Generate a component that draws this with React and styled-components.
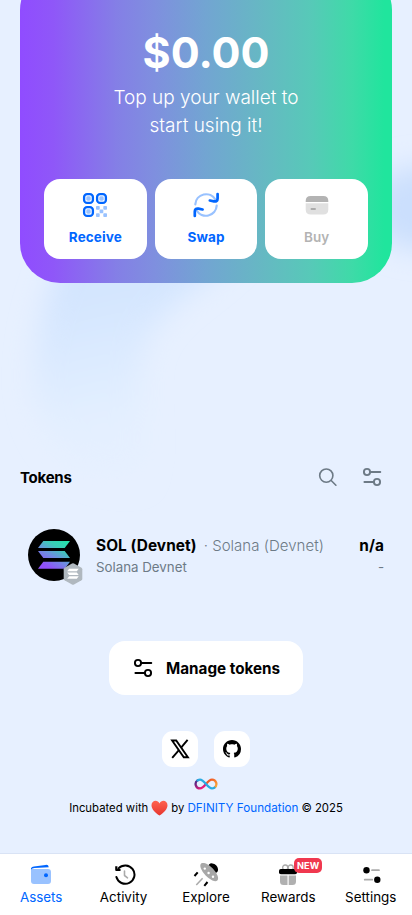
import React from 'react';
import styled, { createGlobalStyle } from 'styled-components';

const GlobalStyle = createGlobalStyle`
  * { box-sizing: border-box; }
  body { margin: 0; background: #e7f0ff; }
  a { color: #0066ff; text-decoration: none; }
  button { font: inherit; border: 0; padding: 0; background: none; color: inherit; }
  svg { display: block; flex: none; }
`;

const Page = styled.div`
  position: relative;
  height: 915px;
  display: flex;
  flex-direction: column;
  overflow: hidden;
  background: #e7f0ff;
  color: #000;
  font-family: Inter, "Liberation Sans", sans-serif;
`;

const Backdrop = styled.svg`
  position: absolute;
  inset: 0;
`;

const Main = styled.main`
  position: relative;
  flex: 1;
  display: flex;
  flex-direction: column;
  padding: 0 20px;
`;

const Hero = styled.section`
  height: 313px;
  margin-top: -30px;
  padding: 57px 24px 24px;
  border-radius: 40px;
  background: linear-gradient(90deg, #904cff 0%, #8f57f8 9%, #847fe6 26%, #7f8fdf 36%, #72a5d2 50%, #66b8c3 65%, #57c9b8 78%, #3fdaa8 89%, #20e59d 98%);
  color: #fff;
  display: flex;
  flex-direction: column;
  align-items: center;
`;

const Balance = styled.div`
  font-size: 43px;
  line-height: 50px;
  font-weight: 700;
`;

const Hint = styled.p`
  margin: 7px 0 0;
  width: 220px;
  font-size: 19px;
  line-height: 28px;
  font-weight: 350;
  text-align: center;
`;

const Actions = styled.div`
  width: 100%;
  margin-top: auto;
  display: grid;
  grid-template-columns: repeat(3, 1fr);
  gap: 8px;
`;

const Action = styled.button`
  height: 80px;
  padding-top: 13px;
  display: flex;
  flex-direction: column;
  align-items: center;
  gap: 9px;
  border-radius: 16px;
  background: #fff;
  color: ${p => (p.disabled ? '#b3b3b3' : '#0066ff')};
  font-size: 13.5px;
  line-height: 20px;
  font-weight: ${p => (p.disabled ? 600 : 700)};
  letter-spacing: 0.1px;
`;

const ListHeader = styled.header`
  margin-top: 182px;
  height: 24px;
  display: flex;
  align-items: center;
  padding-right: 10px;
`;

const Heading = styled.h2`
  flex: 1;
  margin: 2px 0 0;
  font-size: 15px;
  line-height: 24px;
  font-weight: 700;
  letter-spacing: -0.25px;
`;

const Tools = styled.div`
  display: flex;
  gap: 24px;
  color: #6d7a86;
`;

const TokenRow = styled.div`
  margin-top: 40px;
  padding: 0 8px;
  height: 52px;
  display: flex;
  align-items: center;
  gap: 16px;
`;

const Logo = styled.div`
  position: relative;
  width: 52px;
  height: 52px;
`;

const NetworkBadge = styled.svg`
  position: absolute;
  left: 35px;
  top: 33px;
`;

const TokenText = styled.div`
  display: flex;
  flex-direction: column;
  align-items: ${p => (p.$end ? 'flex-end' : 'flex-start')};
  flex: ${p => (p.$end ? 'none' : 1)};
`;

const Primary = styled.div`
  display: flex;
  gap: 7px;
  padding-top: 2px;
  font-size: 15.4px;
  line-height: 22px;
  white-space: nowrap;
`;

const Strong = styled.strong`
  font-weight: 700;
  letter-spacing: 0.07px;
`;

const Muted = styled.span`
  color: #6d7a86;
  font-size: 15px;
  font-weight: 350;
  letter-spacing: 0.03px;
`;

const Secondary = styled.div`
  color: #6d7a86;
  font-size: 13.3px;
  line-height: 20px;
`;

const ManageButton = styled.button`
  align-self: center;
  margin-top: 60px;
  width: 194px;
  height: 54px;
  display: flex;
  align-items: center;
  gap: 13px;
  padding-left: 24px;
  border-radius: 16px;
  background: #fff;
  font-size: 15.25px;
  font-weight: 700;
`;

const Footer = styled.footer`
  margin-top: 36px;
  display: flex;
  flex-direction: column;
  align-items: center;
`;

const Socials = styled.div`
  display: flex;
  gap: 16px;
  margin-bottom: 11px;
`;

const Social = styled.a`
  width: 36px;
  height: 36px;
  display: grid;
  place-items: center;
  border-radius: 11px;
  background: #fff;
  color: #000;
`;

const Credit = styled.div`
  margin-top: 8px;
  display: flex;
  align-items: center;
  gap: 3px;
  font-size: 11.35px;
  line-height: 20px;
  white-space: nowrap;
`;

const Wide = styled.a`
  font-size: 11.7px;
`;

const Nav = styled.nav`
  position: relative;
  height: 62px;
  display: grid;
  grid-template-columns: repeat(5, 82.4px);
  border-top: 1px solid #d9e3f5;
  background: #fff;
`;

const NavItem = styled.a`
  position: relative;
  display: flex;
  flex-direction: column;
  align-items: center;
  padding-top: 9px;
  color: ${p => (p.$active ? '#0066ff' : '#000')};
  font-size: 13.4px;
  line-height: 20px;
`;

const NewTag = styled.span`
  position: absolute;
  left: 47px;
  top: 4px;
  width: 28px;
  height: 15px;
  border-radius: 5px;
  background: #f0384f;
  color: #fff;
  font-size: 9.2px;
  font-weight: 700;
  line-height: 15px;
  text-align: center;
`;

const Glows = () => (
  <Backdrop width="412" height="915" aria-hidden="true">
    <defs>
      <filter id="soft" x="-50%" y="-50%" width="200%" height="200%"><feGaussianBlur stdDeviation="14" /></filter>
      <linearGradient id="fall" x1="0.35" y1="0" x2="0.55" y2="1">
        <stop offset="0.2" stopColor="#d3e5fe" />
        <stop offset="0.7" stopColor="#e3efff" />
        <stop offset="1" stopColor="#e7f0ff" />
      </linearGradient>
    </defs>
    <path filter="url(#soft)" fill="url(#fall)" d="M72 235 H250 C215 290 150 300 142 365 C137 410 150 460 135 480 C80 480 28 440 35 365 C37 315 55 275 72 235Z" />
    <ellipse filter="url(#soft)" cx="422" cy="208" rx="52" ry="42" fill="#cbdffd" />
  </Backdrop>
);

const QrIcon = () => (
  <svg width="26" height="26" viewBox="0 0 26 26" fill="none">
    {[[2.1, 2.1], [15.1, 2.1], [2.1, 15.1]].map(([x, y]) => (
      <g key={`${x}-${y}`}>
        <rect x={x} y={y} width="8.8" height="8.8" rx="3" stroke="#0066ff" strokeWidth="2.3" />
        <rect x={x + 2.2} y={y + 2.2} width="4.4" height="4.4" rx="1.4" fill="#99c2ff" />
      </g>
    ))}
    {[[14, 14], [21.3, 14], [17.6, 17.6], [14, 21.3], [21.3, 21.3]].map(([x, y]) => (
      <rect key={`${x}-${y}`} x={x} y={y} width="3.7" height="3.7" rx="0.8" fill="#99c2ff" />
    ))}
  </svg>
);

const SwapIcon = () => (
  <svg width="26" height="26" viewBox="0 0 26 26" fill="none" strokeWidth="2.2" strokeLinecap="round" strokeLinejoin="round">
    <path d="M2.300 12.300A10.800 10.800 0 0 1 22.400 7.600M23.700 13.700A10.800 10.800 0 0 1 3.600 18.400" stroke="#99c2ff" />
    <path d="M24.600 2V6.400Q24.600 9.800 21 9.300L16.800 8.500M1.800 24V19.600Q1.800 16.200 5.400 16.700L9.600 17.500" stroke="#0066ff" strokeWidth="2.7" />
  </svg>
);

const CardIcon = () => (
  <svg width="24" height="26" viewBox="0 0 24 26">
    <path d="M.7 10V9Q.7 4 5.700 4H18.300Q23.300 4 23.300 9V10Z" fill="#b3b3b3" />
    <path d="M.7 11.300H23.300V17.500Q23.300 22.500 18.300 22.500H5.700Q.7 22.500 .7 17.500Z" fill="#e0e0e0" />
    <path d="M6.300 16.900H10.200" stroke="#999" strokeWidth="1.500" strokeLinecap="round" />
  </svg>
);

const SearchIcon = () => (
  <svg width="20" height="20" viewBox="0 0 20 20" fill="none" stroke="currentColor" strokeWidth="1.600" strokeLinecap="round">
    <circle cx="8.300" cy="8.600" r="6.600" /><path d="M13.200 13.500L17.900 18.200" />
  </svg>
);

const SlidersIcon = () => (
  <svg width="20" height="20" viewBox="0 0 20 20" fill="none" stroke="currentColor" strokeWidth="1.900" strokeLinecap="round">
    <circle cx="5" cy="5" r="3.100" /><circle cx="15" cy="15" r="3.100" />
    <path d="M8.500 5H18.300M2.400 15H11.500" />
  </svg>
);

const BARS = [
  'M5.300 0H32L26.700 7H0Z',
  'M0 10H26.700L32 17H5.300Z',
  'M5.300 20.700H32L26.700 27.700H0Z',
];

const SolanaLogo = () => (
  <svg width="52" height="52" viewBox="0 0 52 52">
    <defs>
      <linearGradient id="sol" gradientUnits="userSpaceOnUse" x1="28" y1="-3" x2="8" y2="32">
        <stop stopColor="#1de9a8" /><stop offset="0.3" stopColor="#3ccbb8" />
        <stop offset="0.55" stopColor="#6d8fe0" /><stop offset="0.85" stopColor="#9150fa" />
      </linearGradient>
    </defs>
    <circle cx="26" cy="26" r="26" />
    <g transform="translate(10 12)" fill="url(#sol)">{BARS.map(d => <path key={d} d={d} />)}</g>
  </svg>
);

const SolanaBadge = () => (
  <NetworkBadge width="20" height="24" viewBox="0 0 20 24">
    <path d="M9 1.500Q10 1 11 1.500L18.500 5.700Q19.300 6.200 19.300 7.200V16.800Q19.300 17.800 18.500 18.300L11 22.500Q10 23 9 22.500L1.500 18.300Q.7 17.800 .7 16.800V7.200Q.7 6.200 1.500 5.700Z" fill="#b0b8bf" />
    <g transform="translate(4.200 6.800) scale(.36)" fill="#fff">{BARS.map(d => <path key={d} d={d} />)}</g>
  </NetworkBadge>
);

const XIcon = () => (
  <svg width="20" height="20" viewBox="0 0 20 20" fill="none" stroke="#000">
    <path d="M2.100 1.500H6.200L17.900 18.300H13.800Z" strokeWidth="1.900" />
    <path d="M17.600 .8L11.300 8.300M8.700 11.300L2.200 18.900" strokeWidth="1.900" />
  </svg>
);

const GithubIcon = () => (
  <svg width="18" height="18" viewBox="0 0 16 16" fill="currentColor">
    <path d="M8 0C3.580 0 0 3.580 0 8c0 3.540 2.290 6.530 5.470 7.590.4.070.55-.17.55-.38 0-.19-.01-.82-.01-1.490-2.010.37-2.530-.49-2.690-.94-.09-.23-.48-.94-.82-1.130-.28-.15-.68-.52-.01-.53.63-.01 1.080.58 1.230.82.72 1.210 1.870.87 2.330.66.070-.52.28-.87.51-1.070-1.780-.2-3.640-.89-3.640-3.950 0-.87.31-1.590.82-2.150-.08-.2-.36-1.020.08-2.120 0 0 .67-.21 2.200.82.64-.18 1.320-.27 2-.27s1.360.09 2 .27c1.530-1.040 2.200-.82 2.200-.82.44 1.100.16 1.920.08 2.120.51.56.82 1.270.82 2.150 0 3.070-1.870 3.750-3.650 3.950.29.25.54.73.54 1.480 0 1.070-.01 1.930-.01 2.200 0 .21.15.46.55.38A8.010 8.010 0 0 0 16 8c0-4.420-3.580-8-8-8z" />
  </svg>
);

const InfinityLogo = () => (
  <svg width="24" height="12" viewBox="0 0 24 12" fill="none" strokeWidth="2.300" strokeLinecap="round">
    <defs>
      <linearGradient id="infR" x1="0" x2="1" y1="0" y2="1"><stop offset=".2" stopColor="#f15a24" /><stop offset="1" stopColor="#fbb03b" /></linearGradient>
      <linearGradient id="infL" x1="1" x2="0" y1="1" y2="0"><stop offset=".2" stopColor="#ed1e79" /><stop offset=".9" stopColor="#522785" /></linearGradient>
    </defs>
    <path d="M12 6C14 3.500 15.500 1.600 18 1.600A4.400 4.400 0 0 1 20.500 9.600" stroke="url(#infR)" />
    <path d="M12 6C10 8.500 8.500 10.400 6 10.400A4.400 4.400 0 0 1 3.500 2.400" stroke="url(#infL)" />
    <path d="M3.500 2.400C4.300 1.900 5 1.600 6 1.600C10.500 1.600 13.500 10.400 18 10.400C19 10.400 19.700 10.200 20.500 9.600" stroke="#29abe2" />
  </svg>
);

const Heart = () => (
  <svg width="17" height="16" viewBox="0 0 17 16">
    <defs><linearGradient id="heart" x1="0" x2="0" y1="0" y2="1"><stop stopColor="#ff6250" /><stop offset="1" stopColor="#e6362f" /></linearGradient></defs>
    <path d="M8.500 15.500C4 12.500 .5 9 .5 5.200C.5 .3 6.600-.8 8.500 3.400C10.400-.8 16.500 .3 16.500 5.200C16.500 9 13 12.500 8.500 15.500Z" fill="url(#heart)" />
  </svg>
);

const WalletIcon = () => (
  <svg width="24" height="24" viewBox="0 0 24 24">
    <path d="M2 5Q3 6.200 5 6H19Q22 6 22 9V18Q22 21 19 21H5Q2 21 2 18Z" fill="#99c2ff" />
    <path d="M2 5.200Q2.600 3.800 5 3.500L16.500 1.900Q19.500 1.500 19.800 4.300L5.500 4.900Q3 5.100 2 6.600Z" fill="#0066ff" />
    <circle cx="17" cy="12.300" r="2" fill="#0066ff" />
  </svg>
);

const HistoryIcon = () => (
  <svg width="24" height="24" viewBox="-1 0 24 24" fill="none" strokeLinecap="round" strokeLinejoin="round">
    <path d="M5.500 5.400A9.200 9.200 0 1 1 3.400 14" stroke="#000" strokeWidth="2" />
    <path d="M3.300 3.300V7H7.500" stroke="#000" strokeWidth="2.200" strokeLinecap="butt" />
    <path d="M11.500 8V12.500L14.500 14.800" stroke="#aaa" strokeWidth="1.600" />
  </svg>
);

const UfoIcon = () => (
  <svg width="26" height="24" viewBox="0 0 26 24" fill="none">
    <ellipse cx="20" cy="5.400" rx="5.600" ry="4.400" transform="rotate(45 20 5.400)" fill="#000" />
    <ellipse cx="16.200" cy="9" rx="11.700" ry="5" transform="rotate(46 16.200 9)" fill="#a8a8a8" />
    <g fill="#fff"><circle cx="11.800" cy="5.600" r="1.200" /><circle cx="15.600" cy="10" r="1.200" /><circle cx="20" cy="13.700" r="1.200" /></g>
    <path d="M4.700 9.300L1.500 13M14.500 19L11.300 22.800" stroke="#000" strokeWidth="2" />
    <path d="M9.600 15.300L3.300 22" stroke="#aaa" strokeWidth="1.500" />
  </svg>
);

const GiftIcon = () => (
  <svg width="24" height="24" viewBox="0 0 24 24" fill="none">
    <rect x="6.700" y="2" width="5" height="5" rx="2.300" stroke="#aaa" strokeWidth="1.300" />
    <rect x="12.200" y="2" width="5" height="5" rx="2.300" stroke="#aaa" strokeWidth="1.300" />
    <path d="M4 12.500H11.500V22H7.500Q4 22 4 18.500ZM12.700 12.500H20V18.500Q20 22 16.500 22H12.700Z" fill="#b0b0b0" />
    <rect x="3" y="6" width="18" height="5.300" rx="1.800" fill="#000" />
  </svg>
);

const SettingsIcon = () => (
  <svg width="24" height="24" viewBox="-1 0 24 24" strokeWidth="1.700" strokeLinecap="round">
    <path d="M12 7.200H19M4.700 16.700H12.300" stroke="#aaa" />
    <circle cx="6.500" cy="7.200" r="3.200" /><circle cx="17.300" cy="16.700" r="3.200" />
  </svg>
);

const NAV = [
  ['Assets', WalletIcon], ['Activity', HistoryIcon], ['Explore', UfoIcon],
  ['Rewards', GiftIcon], ['Settings', SettingsIcon],
];

export default function App() {
  return (
    <Page>
      <GlobalStyle />
      <Glows />
      <Main>
        <Hero>
          <Balance>$0.00</Balance>
          <Hint>Top up your wallet to start using it!</Hint>
          <Actions>
            <Action><QrIcon />Receive</Action>
            <Action><SwapIcon />Swap</Action>
            <Action disabled><CardIcon />Buy</Action>
          </Actions>
        </Hero>
        <ListHeader>
          <Heading>Tokens</Heading>
          <Tools><SearchIcon /><SlidersIcon /></Tools>
        </ListHeader>
        <TokenRow>
          <Logo><SolanaLogo /><SolanaBadge /></Logo>
          <TokenText>
            <Primary><Strong>SOL (Devnet)</Strong><Muted>· Solana (Devnet)</Muted></Primary>
            <Secondary>Solana Devnet</Secondary>
          </TokenText>
          <TokenText $end>
            <Primary><Strong>n/a</Strong></Primary>
            <Secondary>-</Secondary>
          </TokenText>
        </TokenRow>
        <ManageButton><SlidersIcon />Manage tokens</ManageButton>
        <Footer>
          <Socials>
            <Social aria-label="X"><XIcon /></Social>
            <Social aria-label="GitHub"><GithubIcon /></Social>
          </Socials>
          <InfinityLogo />
          <Credit>
            <span>Incubated with</span><Heart /><span>by</span>
            <Wide>DFINITY Foundation</Wide><span>© 2025</span>
          </Credit>
        </Footer>
      </Main>
      <Nav>
        {NAV.map(([label, Icon], i) => (
          <NavItem key={label} $active={i === 0}>
            <Icon />{label}
            {label === 'Rewards' && <NewTag>NEW</NewTag>}
          </NavItem>
        ))}
      </Nav>
    </Page>
  );
}
